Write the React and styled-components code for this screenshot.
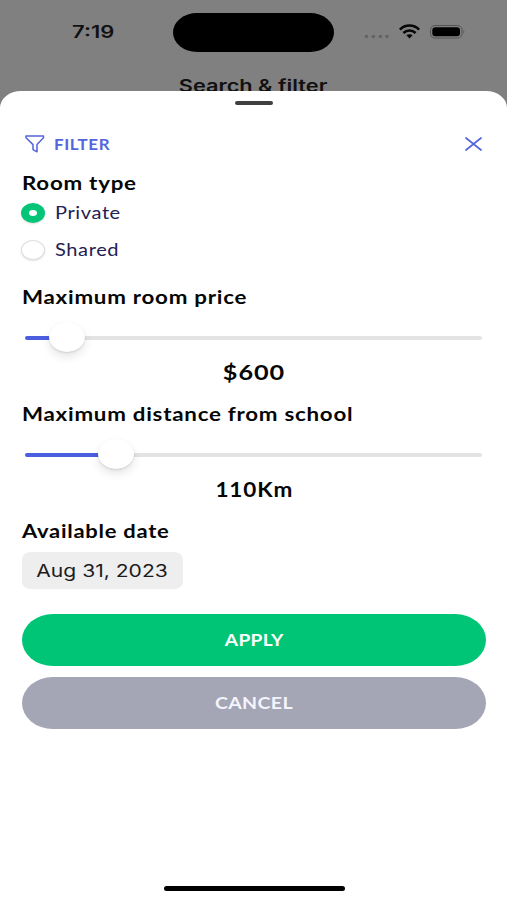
import React, { useState } from "react";
import styled, { createGlobalStyle } from "styled-components";

const GlobalStyle = createGlobalStyle`
  * {
    box-sizing: border-box;
  }

  body {
    margin: 0;
    background: #808080;
    font-family: Lato, "Liberation Sans", sans-serif;
    color: #060606;
  }
`;

const Screen = styled.div`
  width: 100%;
  height: 100vh;
  display: flex;
  flex-direction: column;
  overflow: hidden;
  background: #808080;
`;

const StatusBar = styled.header`
  height: 65px;
  flex-shrink: 0;
  display: grid;
  grid-template-columns: 1fr 161px 1fr;
  align-items: center;
`;

const Island = styled.div`
  height: 39px;
  border-radius: 24px / 19.5px;
  background: #000;
`;

/* wide lettering: the glyphs are stretched sideways */
const Text = styled.span`
  display: inline-block;
  white-space: nowrap;
  transform: scaleX(${(p) => p.$stretch || 1.24});
  transform-origin: ${(p) => p.$origin || "left"} center;
`;

const Clock = styled.div`
  padding: 0 0 1px 72px;
  font: 600 17px Inter, sans-serif;
  color: #111;
`;

const StatusIcons = styled.div`
  display: flex;
  align-items: center;
  padding-left: 29px;
`;

const PageTitle = styled.div`
  height: 26px;
  flex-shrink: 0;
  overflow: visible;
  text-align: center;
  font: 600 17px/43px Inter, sans-serif;
  color: #111;
`;

const Sheet = styled.main`
  position: relative;
  flex: 1;
  display: flex;
  flex-direction: column;
  padding: 10px 21px 9px 22px;
  border-radius: 21px 21px 0 0 / 17px 17px 0 0;
  background: #fff;
`;

const Handle = styled.div`
  width: 38px;
  height: 4px;
  flex-shrink: 0;
  align-self: center;
  border-radius: 2px;
  background: #404040;
`;

const SheetHeader = styled.div`
  display: flex;
  align-items: center;
  justify-content: space-between;
  height: 32px;
  margin-top: 23px;
  padding: 0 4px 0 3px;
`;

const HeaderLabel = styled.div`
  display: flex;
  align-items: center;
  gap: 9px;
  padding-bottom: 1px;
  font-size: 15px;
  font-weight: 700;
  letter-spacing: 0.5px;
  color: #5465dd;
`;

const CloseButton = styled.button`
  display: flex;
  padding: 0;
  border: none;
  background: none;
`;

const SectionTitle = styled.h2`
  height: 24px;
  margin: ${(p) => p.$top}px 0 0;
  font-size: 18px;
  line-height: 24px;
  font-weight: 700;
  letter-spacing: 0.6px;
`;

const RadioList = styled.div`
  display: flex;
  flex-direction: column;
  gap: 13px;
  margin-top: 6px;
`;

const RadioRow = styled.div`
  display: flex;
  align-items: center;
  gap: 10px;
  height: 24px;
  font-size: 17px;
  line-height: 24px;
  letter-spacing: 0.5px;
  color: #242052;
`;

const RadioMark = styled.span`
  display: flex;
  align-items: center;
  justify-content: center;
  width: 24px;
  height: 20px;
  margin-left: -1px;
  border-radius: 50%;
  background: ${(p) => (p.$checked ? "#04c478" : "#fff")};
  border: ${(p) => (p.$checked ? "none" : "1px solid #dedede")};
  box-shadow: 0 1px 2px rgba(0, 0, 0, 0.14);

  &::after {
    content: "";
    width: 8px;
    height: 6px;
    border-radius: 50%;
    background: #fff;
  }
`;

const Slider = styled.div`
  display: flex;
  align-items: center;
  height: 30px;
  margin: 14px 4px 0 3px;
`;

const Fill = styled.div`
  height: 4px;
  border-radius: 2px 0 0 2px;
  background: #4c5ee0;
`;

const Thumb = styled.div`
  width: 36px;
  height: 30px;
  margin: -3px -1px 0;
  flex-shrink: 0;
  border-radius: 50%;
  background: #fff;
  box-shadow: 0 5px 10px rgba(0, 0, 0, 0.1), 0 1px 2px rgba(0, 0, 0, 0.12);
  z-index: 1;
`;

const Rest = styled.div`
  flex: 1;
  height: 4px;
  border-radius: 0 2px 2px 0;
  background: #e3e3e3;
`;

const Value = styled.div`
  height: 30px;
  margin-top: 4px;
  text-align: center;
  font-size: 21px;
  line-height: 30px;
  font-weight: 700;
  letter-spacing: 0.8px;
`;

const DateField = styled.button`
  align-self: flex-start;
  width: 161px;
  height: 37px;
  margin-top: 9px;
  padding: 0;
  border: none;
  border-radius: 9px / 7px;
  background: #eeeeef;
  font: 400 17px Inter, sans-serif;
  color: #1c1c1c;
`;

const Actions = styled.div`
  display: flex;
  flex-direction: column;
  gap: 11px;
  margin-top: 25px;
`;

const ActionButton = styled.button`
  height: 52px;
  padding: 0 0 2px;
  border: none;
  border-radius: 31px / 26px;
  background: ${(p) => (p.$muted ? "#a4a5b5" : "#01c576")};
  font: 700 17px Lato, sans-serif;
  letter-spacing: 0.3px;
  color: ${(p) => (p.$muted ? "#f3f4fc" : "#fff")};
`;

const HomeIndicator = styled.div`
  width: 181px;
  height: 5px;
  margin-top: auto;
  align-self: center;
  border-radius: 3px;
  background: #000;
`;

const Signal = () => (
  <svg width="104" height="20" viewBox="0 0 104 20">
    <g fill="#646464">
      <circle cx="3.4" cy="13.5" r="1.8" />
      <circle cx="10.4" cy="13.5" r="1.8" />
      <circle cx="17.4" cy="13.5" r="1.8" />
      <circle cx="24" cy="13.5" r="1.8" />
    </g>
    <g transform="translate(46.5 0)" fill="none" stroke="#070707" strokeWidth="2.6">
      <path d="M-9.6 6.6C-4.3 1.2 4.3 1.2 9.6 6.6" />
      <path d="M-6.1 10C-2.6 6.7 2.6 6.7 6.1 10" />
      <path d="M-3.1 12.3C-1.3 10.8 1.3 10.8 3.1 12.3L0 15.4Z" fill="#070707" stroke="none" />
    </g>
    <rect x="67.5" y="2.5" width="31.5" height="12.6" rx="4.4" fill="none" stroke="#555" strokeWidth="1" />
    <rect x="69.3" y="4.3" width="27.7" height="9" rx="3" fill="#000" />
    <path d="M100.5 7q1.8 1.8 0 3.8z" fill="#4a4a4a" />
  </svg>
);

const Funnel = () => (
  <svg width="20" height="18" viewBox="0 0 20 18" fill="none" stroke="#5465dd" strokeWidth="1.5" strokeLinejoin="round">
    <path d="M1 1H18.5V2.8L12 9.6V16.8L8 14.6V9.6L1 2.8Z" />
  </svg>
);

const Cross = () => (
  <svg width="17" height="14" viewBox="0 0 17 14" stroke="#5465dd" strokeWidth="1.7" strokeLinecap="round">
    <path d="M1 1L16 13M16 1L1 13" />
  </svg>
);

const Range = ({ filled }) => (
  <Slider>
    <Fill style={{ width: filled }} />
    <Thumb />
    <Rest />
  </Slider>
);

const roomTypes = ["Private", "Shared"];

const App = () => {
  const [roomType, setRoomType] = useState("Private");

  return (
    <Screen>
      <GlobalStyle />
      <StatusBar>
        <Clock>
          <Text $stretch={1.29}>7:19</Text>
        </Clock>
        <Island />
        <StatusIcons>
          <Signal />
        </StatusIcons>
      </StatusBar>
      <PageTitle>
        <Text $stretch={1.28} $origin="center">
          Search &amp; filter
        </Text>
      </PageTitle>
      <Sheet>
        <Handle />
        <SheetHeader>
          <HeaderLabel>
            <Funnel />
            <Text $stretch={1.13}>FILTER</Text>
          </HeaderLabel>
          <CloseButton aria-label="Close">
            <Cross />
          </CloseButton>
        </SheetHeader>

        <SectionTitle $top={11}>
          <Text>Room type</Text>
        </SectionTitle>
        <RadioList>
          {roomTypes.map((type) => (
            <RadioRow key={type} onClick={() => setRoomType(type)}>
              <RadioMark $checked={type === roomType} />
              <Text $stretch={1.18}>{type}</Text>
            </RadioRow>
          ))}
        </RadioList>

        <SectionTitle $top={23}>
          <Text>Maximum room price</Text>
        </SectionTitle>
        <Range filled={25} />
        <Value>
          <Text $stretch={1.2} $origin="center">
            $600
          </Text>
        </Value>

        <SectionTitle $top={15}>
          <Text>Maximum distance from school</Text>
        </SectionTitle>
        <Range filled={74} />
        <Value>
          <Text $stretch={1.07} $origin="center">
            110Km
          </Text>
        </Value>

        <SectionTitle $top={15}>
          <Text $stretch={1.22}>Available date</Text>
        </SectionTitle>
        <DateField>
          <Text $origin="center">Aug 31, 2023</Text>
        </DateField>

        <Actions>
          <ActionButton>
            <Text $stretch={1.12} $origin="center">
              APPLY
            </Text>
          </ActionButton>
          <ActionButton $muted>
            <Text $stretch={1.15} $origin="center">
              CANCEL
            </Text>
          </ActionButton>
        </Actions>
        <HomeIndicator />
      </Sheet>
    </Screen>
  );
};

export default App;
